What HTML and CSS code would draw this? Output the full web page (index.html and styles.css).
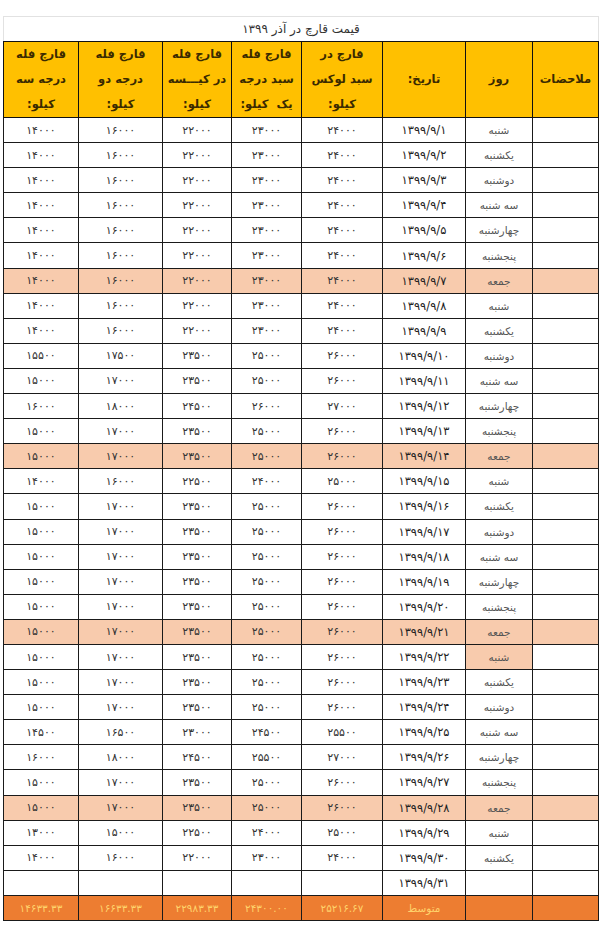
FILE: index.html
```html
<!DOCTYPE html>
<html lang="fa" dir="rtl">
<head>
<meta charset="utf-8">
<title>قیمت قارچ در آذر ۱۳۹۹</title>
<link rel="stylesheet" href="styles.css">
</head>
<body>
<table class="sheet">
  <colgroup>
    <col class="c-note"><col class="c-day"><col class="c-date"><col class="c-lux"><col class="c-g1"><col class="c-bag"><col class="c-g2"><col class="c-g3">
  </colgroup>
  <thead>
    <tr class="title-row"><th colspan="8" class="title">قیمت قارچ در آذر ۱۳۹۹</th></tr>
    <tr class="head-row">
      <th>ملاحضات</th>
      <th>روز</th>
      <th>تاریخ:</th>
      <th>قارچ در<br>سبد لوکس<br>کیلو:</th>
      <th>قارچ فله<br>سبد درجه<br>یک&nbsp; کیلو:</th>
      <th>قارچ فله<br>در کیـــسه<br>کیلو:</th>
      <th>قارچ فله<br>درجه دو<br>کیلو:</th>
      <th>قارچ فله<br>درجه سه<br>کیلو:</th>
    </tr>
  </thead>
  <tbody>
    <tr><td></td><td class="day">شنبه</td><td class="date">۱۳۹۹/۹/۱</td><td>۲۴۰۰۰</td><td>۲۳۰۰۰</td><td>۲۲۰۰۰</td><td>۱۶۰۰۰</td><td>۱۴۰۰۰</td></tr>
    <tr><td></td><td class="day">یکشنبه</td><td class="date">۱۳۹۹/۹/۲</td><td>۲۴۰۰۰</td><td>۲۳۰۰۰</td><td>۲۲۰۰۰</td><td>۱۶۰۰۰</td><td>۱۴۰۰۰</td></tr>
    <tr><td></td><td class="day">دوشنبه</td><td class="date">۱۳۹۹/۹/۳</td><td>۲۴۰۰۰</td><td>۲۳۰۰۰</td><td>۲۲۰۰۰</td><td>۱۶۰۰۰</td><td>۱۴۰۰۰</td></tr>
    <tr><td></td><td class="day">سه شنبه</td><td class="date">۱۳۹۹/۹/۴</td><td>۲۴۰۰۰</td><td>۲۳۰۰۰</td><td>۲۲۰۰۰</td><td>۱۶۰۰۰</td><td>۱۴۰۰۰</td></tr>
    <tr><td></td><td class="day">چهارشنبه</td><td class="date">۱۳۹۹/۹/۵</td><td>۲۴۰۰۰</td><td>۲۳۰۰۰</td><td>۲۲۰۰۰</td><td>۱۶۰۰۰</td><td>۱۴۰۰۰</td></tr>
    <tr><td></td><td class="day">پنجشنبه</td><td class="date">۱۳۹۹/۹/۶</td><td>۲۴۰۰۰</td><td>۲۳۰۰۰</td><td>۲۲۰۰۰</td><td>۱۶۰۰۰</td><td>۱۴۰۰۰</td></tr>
    <tr class="holiday"><td></td><td class="day">جمعه</td><td class="date">۱۳۹۹/۹/۷</td><td>۲۴۰۰۰</td><td>۲۳۰۰۰</td><td>۲۲۰۰۰</td><td>۱۶۰۰۰</td><td>۱۴۰۰۰</td></tr>
    <tr><td></td><td class="day">شنبه</td><td class="date">۱۳۹۹/۹/۸</td><td>۲۴۰۰۰</td><td>۲۳۰۰۰</td><td>۲۲۰۰۰</td><td>۱۶۰۰۰</td><td>۱۴۰۰۰</td></tr>
    <tr><td></td><td class="day">یکشنبه</td><td class="date">۱۳۹۹/۹/۹</td><td>۲۴۰۰۰</td><td>۲۳۰۰۰</td><td>۲۲۰۰۰</td><td>۱۶۰۰۰</td><td>۱۴۰۰۰</td></tr>
    <tr><td></td><td class="day">دوشنبه</td><td class="date">۱۳۹۹/۹/۱۰</td><td>۲۶۰۰۰</td><td>۲۵۰۰۰</td><td>۲۳۵۰۰</td><td>۱۷۵۰۰</td><td>۱۵۵۰۰</td></tr>
    <tr><td></td><td class="day">سه شنبه</td><td class="date">۱۳۹۹/۹/۱۱</td><td>۲۶۰۰۰</td><td>۲۵۰۰۰</td><td>۲۳۵۰۰</td><td>۱۷۰۰۰</td><td>۱۵۰۰۰</td></tr>
    <tr><td></td><td class="day">چهارشنبه</td><td class="date">۱۳۹۹/۹/۱۲</td><td>۲۷۰۰۰</td><td>۲۶۰۰۰</td><td>۲۴۵۰۰</td><td>۱۸۰۰۰</td><td>۱۶۰۰۰</td></tr>
    <tr><td></td><td class="day">پنجشنبه</td><td class="date">۱۳۹۹/۹/۱۳</td><td>۲۶۰۰۰</td><td>۲۵۰۰۰</td><td>۲۳۵۰۰</td><td>۱۷۰۰۰</td><td>۱۵۰۰۰</td></tr>
    <tr class="holiday"><td></td><td class="day">جمعه</td><td class="date">۱۳۹۹/۹/۱۴</td><td>۲۶۰۰۰</td><td>۲۵۰۰۰</td><td>۲۳۵۰۰</td><td>۱۷۰۰۰</td><td>۱۵۰۰۰</td></tr>
    <tr><td></td><td class="day">شنبه</td><td class="date">۱۳۹۹/۹/۱۵</td><td>۲۵۰۰۰</td><td>۲۴۰۰۰</td><td>۲۲۵۰۰</td><td>۱۶۰۰۰</td><td>۱۴۰۰۰</td></tr>
    <tr><td></td><td class="day">یکشنبه</td><td class="date">۱۳۹۹/۹/۱۶</td><td>۲۶۰۰۰</td><td>۲۵۰۰۰</td><td>۲۳۵۰۰</td><td>۱۷۰۰۰</td><td>۱۵۰۰۰</td></tr>
    <tr><td></td><td class="day">دوشنبه</td><td class="date">۱۳۹۹/۹/۱۷</td><td>۲۶۰۰۰</td><td>۲۵۰۰۰</td><td>۲۳۵۰۰</td><td>۱۷۰۰۰</td><td>۱۵۰۰۰</td></tr>
    <tr><td></td><td class="day">سه شنبه</td><td class="date">۱۳۹۹/۹/۱۸</td><td>۲۶۰۰۰</td><td>۲۵۰۰۰</td><td>۲۳۵۰۰</td><td>۱۷۰۰۰</td><td>۱۵۰۰۰</td></tr>
    <tr><td></td><td class="day">چهارشنبه</td><td class="date">۱۳۹۹/۹/۱۹</td><td>۲۶۰۰۰</td><td>۲۵۰۰۰</td><td>۲۳۵۰۰</td><td>۱۷۰۰۰</td><td>۱۵۰۰۰</td></tr>
    <tr><td></td><td class="day">پنجشنبه</td><td class="date">۱۳۹۹/۹/۲۰</td><td>۲۶۰۰۰</td><td>۲۵۰۰۰</td><td>۲۳۵۰۰</td><td>۱۷۰۰۰</td><td>۱۵۰۰۰</td></tr>
    <tr class="holiday"><td></td><td class="day">جمعه</td><td class="date">۱۳۹۹/۹/۲۱</td><td>۲۶۰۰۰</td><td>۲۵۰۰۰</td><td>۲۳۵۰۰</td><td>۱۷۰۰۰</td><td>۱۵۰۰۰</td></tr>
    <tr><td></td><td class="day mark">شنبه</td><td class="date">۱۳۹۹/۹/۲۲</td><td>۲۶۰۰۰</td><td>۲۵۰۰۰</td><td>۲۳۵۰۰</td><td>۱۷۰۰۰</td><td>۱۵۰۰۰</td></tr>
    <tr><td></td><td class="day">یکشنبه</td><td class="date">۱۳۹۹/۹/۲۳</td><td>۲۶۰۰۰</td><td>۲۵۰۰۰</td><td>۲۳۵۰۰</td><td>۱۷۰۰۰</td><td>۱۵۰۰۰</td></tr>
    <tr><td></td><td class="day">دوشنبه</td><td class="date">۱۳۹۹/۹/۲۴</td><td>۲۶۰۰۰</td><td>۲۵۰۰۰</td><td>۲۳۵۰۰</td><td>۱۷۰۰۰</td><td>۱۵۰۰۰</td></tr>
    <tr><td></td><td class="day">سه شنبه</td><td class="date">۱۳۹۹/۹/۲۵</td><td>۲۵۵۰۰</td><td>۲۴۵۰۰</td><td>۲۳۰۰۰</td><td>۱۶۵۰۰</td><td>۱۴۵۰۰</td></tr>
    <tr><td></td><td class="day">چهارشنبه</td><td class="date">۱۳۹۹/۹/۲۶</td><td>۲۷۰۰۰</td><td>۲۵۵۰۰</td><td>۲۴۵۰۰</td><td>۱۸۰۰۰</td><td>۱۶۰۰۰</td></tr>
    <tr><td></td><td class="day">پنجشنبه</td><td class="date">۱۳۹۹/۹/۲۷</td><td>۲۶۰۰۰</td><td>۲۵۰۰۰</td><td>۲۳۵۰۰</td><td>۱۷۰۰۰</td><td>۱۵۰۰۰</td></tr>
    <tr class="holiday"><td></td><td class="day">جمعه</td><td class="date">۱۳۹۹/۹/۲۸</td><td>۲۶۰۰۰</td><td>۲۵۰۰۰</td><td>۲۳۵۰۰</td><td>۱۷۰۰۰</td><td>۱۵۰۰۰</td></tr>
    <tr><td></td><td class="day">شنبه</td><td class="date">۱۳۹۹/۹/۲۹</td><td>۲۵۰۰۰</td><td>۲۴۰۰۰</td><td>۲۲۵۰۰</td><td>۱۵۰۰۰</td><td>۱۳۰۰۰</td></tr>
    <tr><td></td><td class="day">یکشنبه</td><td class="date">۱۳۹۹/۹/۳۰</td><td>۲۴۰۰۰</td><td>۲۳۰۰۰</td><td>۲۲۰۰۰</td><td>۱۶۰۰۰</td><td>۱۴۰۰۰</td></tr>
    <tr><td></td><td class="day"></td><td class="date">۱۳۹۹/۹/۳۱</td><td></td><td></td><td></td><td></td><td></td></tr>
  </tbody>
  <tfoot>
    <tr class="avg"><td></td><td></td><td class="avg-label">متوسط</td><td>۲۵۲۱۶.۶۷</td><td>۲۴۳۰۰.۰۰</td><td>۲۲۹۸۳.۳۳</td><td>۱۶۶۳۳.۳۳</td><td>۱۴۶۳۳.۳۳</td></tr>
  </tfoot>
</table>
</body>
</html>
```

FILE: styles.css
```css
html, body {
  margin: 0;
  padding: 0;
  background: #ffffff;
}

body {
  font-family: "DejaVu Sans", "Noto Sans", sans-serif;
  color: #222;
}

.sheet {
  direction: rtl;
  margin: 16px 0 0 1px;
  width: 595px;
  table-layout: fixed;
  border-collapse: collapse;
}

.c-note { width: 66px; }
.c-day  { width: 67px; }
.c-date { width: 83px; }
.c-lux  { width: 81px; }
.c-g1   { width: 70px; }
.c-bag  { width: 69px; }
.c-g2   { width: 84px; }
.c-g3   { width: 75px; }

.title-row th.title {
  height: 24px;
  padding: 0;
  font-weight: normal;
  font-size: 12px;
  color: #333;
  text-align: center;
  border-top: 1px solid #e2e2e2;
  border-left: 1px solid #e2e2e2;
  border-right: 1px solid #e2e2e2;
  border-bottom: 1px solid #111;
}

.head-row th {
  height: 75px;
  padding: 0;
  background: #ffc000;
  border: 1px solid #111;
  font-size: 11.5px;
  font-weight: bold;
  line-height: 25px;
  color: #3a2a00;
  text-align: center;
  vertical-align: middle;
  white-space: nowrap;
  overflow: hidden;
}

tbody td, tfoot td {
  height: 24.1px;
  padding: 0;
  border: 1px solid #1a1a1a;
  text-align: center;
  vertical-align: middle;
  font-size: 11px;
  letter-spacing: 1.5px;
  color: #333;
  white-space: nowrap;
  overflow: hidden;
}

tbody td.day {
  font-size: 10.5px;
  letter-spacing: 0;
  color: #555;
}

tbody td.date {
  font-size: 11.5px;
  letter-spacing: 0.5px;
  color: #222;
}

tbody tr.holiday td,
tbody td.mark {
  background: #f8cbad;
}

tfoot tr.avg td {
  height: 24px;
  background: #ed7d31;
  color: #ffd36b;
  font-size: 10.5px;
  letter-spacing: 1px;
}

tfoot td.avg-label {
  color: #ffe2a8;
  letter-spacing: 0;
}
```
